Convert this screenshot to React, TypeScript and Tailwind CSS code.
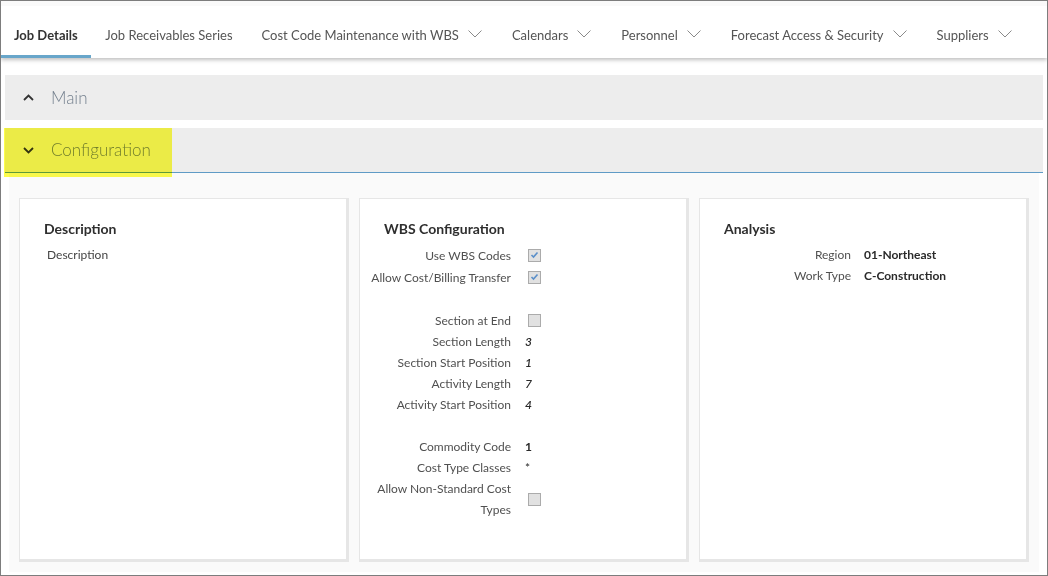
import React from "react"

const tabs = [
  { label: "Job Details", active: true },
  { label: "Job Receivables Series" },
  { label: "Cost Code Maintenance with WBS", menu: true },
  { label: "Calendars", menu: true },
  { label: "Personnel", menu: true },
  { label: "Forecast Access & Security", menu: true },
  { label: "Suppliers", menu: true },
]

function Chevron({ up, className }: { up?: boolean; className?: string }) {
  return (
    <svg width="11" height="7" viewBox="0 0 11 7" className={className}>
      <polyline
        points={up ? "1,6 5.5,1.5 10,6" : "1,1 5.5,5.5 10,1"}
        fill="none"
        stroke="#333"
        strokeWidth="1.8"
      />
    </svg>
  )
}

function TabChevron() {
  return (
    <svg width="14" height="8" viewBox="0 0 14 8" className="ml-[9px] mr-[1px] mb-[3px]">
      <polyline points="0.5,0.5 7,7 13.5,0.5" fill="none" stroke="#8a8a8a" strokeWidth="1" />
    </svg>
  )
}

function Checkbox({ checked }: { checked?: boolean }) {
  return (
    <span className="ml-[3px] flex h-[13px] w-[13px] items-center justify-center border border-[#ababab] bg-[#e1e1e1]">
      {checked && (
        <svg width="9" height="8" viewBox="0 0 9 8">
          <polyline points="1.5,4 3.5,6 7.5,1.5" fill="none" stroke="#5b8fc9" strokeWidth="1.6" />
        </svg>
      )}
    </span>
  )
}

type Row =
  | { spacer: true }
  | { label: string; value?: string; check?: boolean; italic?: boolean; bold?: boolean; h?: string }

const wbsRows: Row[] = [
  { label: "Use WBS Codes", check: true, h: "h-[22px]" },
  { label: "Allow Cost/Billing Transfer", check: true, h: "h-[22px]" },
  { spacer: true },
  { label: "Section at End", check: false, h: "h-[22px]" },
  { label: "Section Length", value: "3", italic: true },
  { label: "Section Start Position", value: "1", italic: true },
  { label: "Activity Length", value: "7", italic: true },
  { label: "Activity Start Position", value: "4", italic: true },
  { spacer: true },
  { label: "Commodity Code", value: "1", bold: true },
  { label: "Cost Type Classes", value: "*" },
  { label: "Allow Non-Standard Cost Types", check: false },
]

const analysisRows: Row[] = [
  { label: "Region", value: "01-Northeast", bold: true },
  { label: "Work Type", value: "C-Construction", bold: true },
]

function Fields({ rows, gap }: { rows: Row[]; gap: string }) {
  return (
    <div className="mt-[6px] flex flex-col">
      {rows.map((r, i) => {
        if ("spacer" in r) return <div key={i} className="h-[21px]" />
        return (
          <div key={i} className={`flex items-center ${r.h ?? "min-h-[21px]"}`}>
            <div className="w-[151px] pl-[8px] text-right text-[12px] leading-[21px] text-[#505050]">
              {r.label}
            </div>
            <div className={`${gap} flex items-center text-[12px] leading-[21px] text-[#2a2a2a]`}>
              {r.check !== undefined ? (
                <Checkbox checked={r.check} />
              ) : (
                <span
                  className={
                    r.italic
                      ? "font-semibold italic"
                      : r.bold
                        ? "font-bold"
                        : ""
                  }
                >
                  {r.value}
                </span>
              )}
            </div>
          </div>
        )
      })}
    </div>
  )
}

function Panel({ title, children }: { title: string; children?: React.ReactNode }) {
  return (
    <div className="h-[364px] border-t border-l border-r-[3px] border-b-[3px] border-[#e6e6e6] bg-white pt-[21px]">
      <h3 className="pl-[24px] text-[14px] font-bold leading-[18px] text-[#2e2e2e]">{title}</h3>
      {children}
    </div>
  )
}

export default function App() {
  return (
    <div className="h-[576px] w-[1048px] overflow-hidden border border-[#7d7d7d] bg-white font-['Lato',sans-serif]">
      {/* Tabs */}
      <div className="relative z-10 flex h-[57px] border-t-[5px] border-[#fafafa] bg-white shadow-[0_2px_4px_rgba(0,0,0,0.25)]">
        {tabs.map((t) => (
          <div
            key={t.label}
            className={`flex h-full items-center border-b-[3px] pt-[10px] text-[13px] ${
              t.active
                ? "border-[#68a6ca] px-[13px] font-bold text-[#333]"
                : "border-transparent px-[14.5px] text-[#555]"
            }`}
          >
            <span>{t.label}</span>
            {t.menu && <TabChevron />}
          </div>
        ))}
      </div>

      {/* Main */}
      <div className="mx-[4px] mt-[17px] flex h-[45px] items-center bg-[#ededed]">
        <Chevron up className="ml-[18px]" />
        <span className="ml-[17px] text-[17px] font-light text-[#74808e]">Main</span>
      </div>

      {/* Configuration */}
      <div className="relative mx-[4px] mt-[8px] flex h-[45px] items-center border-b border-[#5f9bc6] bg-[#ededed]">
        <Chevron className="ml-[18px]" />
        <span className="ml-[17px] text-[17px] font-light text-[#74808e]">Configuration</span>
        <div className="pointer-events-none absolute left-[-1px] top-0 h-[49px] w-[168px] bg-[#fdfd4c] mix-blend-multiply" />
      </div>

      {/* Content */}
      <div className="mx-[8px] grid grid-cols-3 gap-[10px] bg-[#fafafa] px-[10px] pt-[25px] pb-[10px]">
        <Panel title="Description">
          <div className="mt-[6px] pl-[27px] text-[12px] leading-[21px] text-[#444]">Description</div>
        </Panel>
        <Panel title="WBS Configuration">
          <Fields rows={wbsRows} gap="ml-[14px]" />
        </Panel>
        <Panel title="Analysis">
          <Fields rows={analysisRows} gap="ml-[13px]" />
        </Panel>
      </div>
    </div>
  )
}
